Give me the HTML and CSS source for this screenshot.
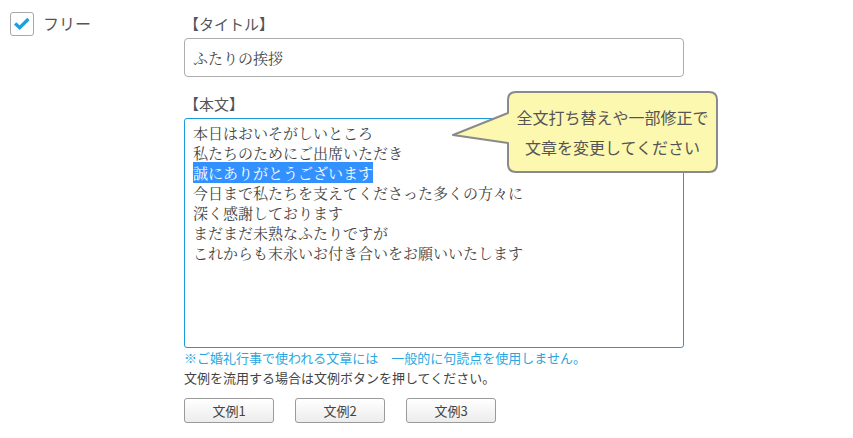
FILE: index.html
```html
<!DOCTYPE html>
<html lang="ja">
<head>
<meta charset="utf-8">
<link rel="stylesheet" href="styles.css">
</head>
<body>
<div class="page">
  <div class="side">
    <span class="check">
      <svg width="24" height="24" viewBox="0 0 24 24"><path d="M4.5 11.5 L9.5 16 L19 6.5" fill="none" stroke="#1c9fe0" stroke-width="3.6" stroke-linecap="butt" stroke-linejoin="miter"/></svg>
    </span>
    <span class="side-label">フリー</span>
  </div>
  <div class="form">
    <div class="label">【タイトル】</div>
    <div class="input">ふたりの挨拶</div>
    <div class="label label-body">【本文】</div>
    <div class="textarea">
      <div>本日はおいそがしいところ</div>
      <div>私たちのためにご出席いただき</div>
      <div><span class="sel">誠にありがとうございます</span></div>
      <div>今日まで私たちを支えてくださった多くの方々に</div>
      <div>深く感謝しております</div>
      <div>まだまだ未熟なふたりですが</div>
      <div>これからも末永いお付き合いをお願いいたします</div>
    </div>
    <div class="note-blue">※ご婚礼行事で使われる文章には　一般的に句読点を使用しません。</div>
    <div class="note">文例を流用する場合は文例ボタンを押してください。</div>
    <div class="buttons">
      <button class="btn">文例1</button>
      <button class="btn">文例2</button>
      <button class="btn">文例3</button>
    </div>
    <div class="callout">
      <svg class="callout-shape" width="267" height="83" viewBox="0 0 267 83">
        <path d="M56 9 Q56 1 64 1 L257 1 Q265 1 265 9 L265 73 Q265 81 257 81 L64 81 Q56 81 56 73 L56 52 L1 44 L56 22 Z" fill="#fcf8b0" stroke="#8a8a8a" stroke-width="2" stroke-linejoin="round"/>
      </svg>
      <div class="callout-text">
        <div>全文打ち替えや一部修正で</div>
        <div>文章を変更してください</div>
      </div>
    </div>
  </div>
</div>
</body>
</html>
```
FILE: styles.css
```css
html, body {
  margin: 0;
  padding: 0;
  background: #fff;
}
body {
  font-family: "Noto Sans CJK JP", "Noto Sans", sans-serif;
  color: #555;
  width: 853px;
  height: 438px;
  overflow: hidden;
}
.page {
  display: flex;
}
.side {
  width: 174px;
  padding: 12px 0 0 10px;
  display: flex;
  align-items: flex-start;
  gap: 9px;
}
.check {
  width: 22px;
  height: 22px;
  border: 1px solid #a8a8a8;
  border-radius: 3px;
  display: flex;
  align-items: center;
  justify-content: center;
  background: #fff;
}
.check svg {
  display: block;
}
.side-label {
  font-size: 16px;
  line-height: 22px;
  color: #555;
}
.form {
  position: relative;
  width: 500px;
  padding-top: 14px;
}
.label {
  font-size: 15px;
  line-height: 20px;
  color: #555;
}
.input {
  margin-top: 4px;
  height: 37px;
  border: 1px solid #adadad;
  border-radius: 4px;
  box-sizing: content-box;
  padding: 0 8px;
  font-family: "Noto Serif CJK JP", "Noto Sans CJK JP", serif;
  font-size: 15px;
  line-height: 37px;
  color: #444;
}
.label-body {
  margin-top: 17px;
}
.textarea {
  margin-top: 4px;
  height: 224px;
  border: 1px solid #1a9cd8;
  border-radius: 3px;
  padding: 4px 8px 0;
  font-family: "Noto Serif CJK JP", "Noto Sans CJK JP", serif;
  font-size: 15px;
  line-height: 20px;
  color: #444;
}
.sel {
  background: #3390ff;
  color: #fff;
}
.note-blue {
  font-size: 13px;
  line-height: 20px;
  color: #2aa7e0;
}
.note {
  font-size: 13px;
  line-height: 20px;
  color: #444;
}
.buttons {
  margin-top: 10px;
  display: flex;
  gap: 21px;
}
.btn {
  width: 90px;
  height: 25px;
  margin: 0;
  padding: 0;
  border: 1px solid #9a9a9a;
  border-radius: 3px;
  background: linear-gradient(#ffffff, #ececec);
  font-family: "Noto Sans CJK JP", "Noto Sans", sans-serif;
  font-size: 13px;
  color: #444;
}
.callout {
  position: absolute;
  left: 268px;
  top: 91px;
  width: 267px;
  height: 83px;
}
.callout-shape {
  position: absolute;
  left: 0;
  top: 0;
}
.callout-text {
  position: absolute;
  left: 56px;
  top: 1px;
  width: 209px;
  height: 80px;
  display: flex;
  flex-direction: column;
  justify-content: center;
  align-items: center;
  font-size: 16px;
  line-height: 30px;
  color: #555;
}
```
